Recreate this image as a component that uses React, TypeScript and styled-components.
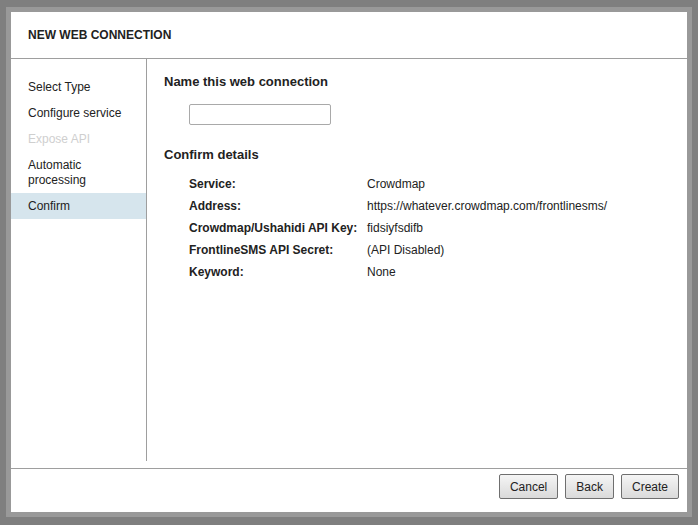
import { Fragment } from 'react';
import styled, { createGlobalStyle } from 'styled-components';

const GlobalStyle = createGlobalStyle`
  html, body {
    margin: 0;
    padding: 0;
    background: #7f7f7f;
  }
  body {
    font-family: "Liberation Sans", Arial, Helvetica, sans-serif;
    font-size: 12px;
    color: #222;
  }
  * {
    box-sizing: border-box;
  }
`;

const Page = styled.div`
  width: 698px;
  height: 525px;
  padding: 7px 6px;
`;

const Frame = styled.div`
  width: 686px;
  height: 510px;
  border: 5px solid #999;
  background: #fff;
  display: flex;
  flex-direction: column;
`;

const Header = styled.div`
  height: 47px;
  border-bottom: 1px solid #9e9e9e;
  display: flex;
  align-items: center;
  padding: 0 17px 1px;
`;

const Title = styled.h1`
  margin: 0;
  font-size: 12px;
  font-weight: bold;
  color: #222;
`;

const Body = styled.div`
  flex: 1;
  display: flex;
  padding-bottom: 7px;
  min-height: 0;
`;

const Sidebar = styled.ul`
  width: 136px;
  margin: 0;
  padding: 15px 0 0;
  list-style: none;
  border-right: 1px solid #9e9e9e;
`;

const Step = styled.li<{ $active?: boolean; $disabled?: boolean }>`
  padding: 6px 17px 5px;
  line-height: 15px;
  font-size: 12px;
  color: ${(p) => (p.$disabled ? '#cfcfcf' : '#222')};
  background: ${(p) => (p.$active ? '#d6e5ed' : 'transparent')};
`;

const Main = styled.div`
  flex: 1;
  padding: 15px 17px 0;
`;

const Heading = styled.h2`
  margin: 0;
  font-size: 13px;
  line-height: 16px;
  font-weight: bold;
  color: #222;
`;

const NameInput = styled.input`
  display: block;
  width: 142px;
  height: 21px;
  margin: 14px 0 22px 25px;
  border: 1px solid #a9a9a9;
  border-radius: 2px;
  padding: 2px 4px;
  font: inherit;
`;

const Details = styled.dl`
  display: grid;
  grid-template-columns: 178px 1fr;
  margin: 10px 0 0 25px;
  line-height: 22px;
`;

const Label = styled.dt`
  font-weight: bold;
`;

const Value = styled.dd`
  margin: 0;
`;

const Footer = styled.div`
  height: 44px;
  border-top: 1px solid #9e9e9e;
  display: flex;
  justify-content: flex-end;
  align-items: flex-start;
  gap: 7px;
  padding: 5px 8px 0;
`;

const Button = styled.button`
  height: 25px;
  padding: 0 10px;
  border: 1px solid #6f6f6f;
  border-radius: 2px;
  background: linear-gradient(#f5f5f5, #dadada);
  font-family: inherit;
  font-size: 12px;
  color: #222;
`;

const steps = [
  { label: 'Select Type' },
  { label: 'Configure service' },
  { label: 'Expose API', disabled: true },
  { label: 'Automatic processing' },
  { label: 'Confirm', active: true },
];

const details = [
  ['Service:', 'Crowdmap'],
  ['Address:', 'https://whatever.crowdmap.com/frontlinesms/'],
  ['Crowdmap/Ushahidi API Key:', 'fidsiyfsdifb'],
  ['FrontlineSMS API Secret:', '(API Disabled)'],
  ['Keyword:', 'None'],
];

export default function App() {
  return (
    <>
      <GlobalStyle />
      <Page>
        <Frame>
          <Header>
            <Title>NEW WEB CONNECTION</Title>
          </Header>
          <Body>
            <Sidebar>
              {steps.map((s) => (
                <Step key={s.label} $active={s.active} $disabled={s.disabled}>
                  {s.label}
                </Step>
              ))}
            </Sidebar>
            <Main>
              <Heading>Name this web connection</Heading>
              <NameInput type="text" />
              <Heading>Confirm details</Heading>
              <Details>
                {details.map(([label, value]) => (
                  <Fragment key={label}>
                    <Label>{label}</Label>
                    <Value>{value}</Value>
                  </Fragment>
                ))}
              </Details>
            </Main>
          </Body>
          <Footer>
            <Button>Cancel</Button>
            <Button>Back</Button>
            <Button>Create</Button>
          </Footer>
        </Frame>
      </Page>
    </>
  );
}
